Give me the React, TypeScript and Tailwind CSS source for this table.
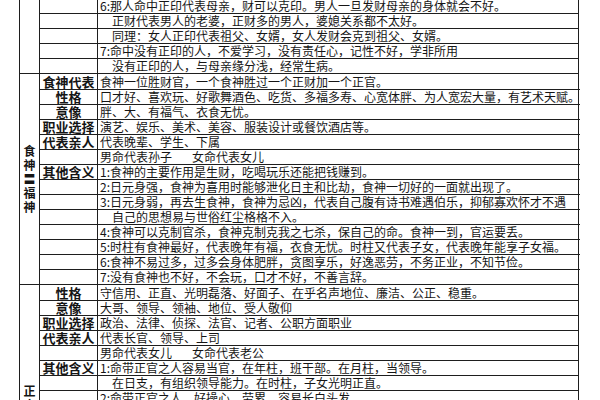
import React from "react";

type Row = { label?: string; text?: React.ReactNode; indent?: boolean };
type Section = { title: string[]; rows: Row[] };

const pair = (a: string, b: string) => (
    <>
        {a}
        <span className="ml-[20px]">{b}</span>
    </>
);

const sections: Section[] = [
    {
        title: [],
        rows: [
            { text: "6:那人命中正印代表母亲，财可以克印。男人一旦发财母亲的身体就会不好。" },
            { text: "正财代表男人的老婆，正财多的男人，婆媳关系都不太好。", indent: true },
            { text: "同理：女人正印代表祖父、女婿，女人发财会克到祖父、女婿。", indent: true },
            { text: "7:命中没有正印的人，不爱学习，没有责任心，记性不好，学非所用" },
            { text: "没有正印的人，与母亲缘分浅，经常生病。", indent: true },
        ],
    },
    {
        title: ["食", "神", "〓", "福", "神"],
        rows: [
            { label: "食神代表", text: "食神一位胜财官，一个食神胜过一个正财加一个正官。" },
            { label: "性格", text: "口才好、喜欢玩、好歌舞酒色、吃货、多福多寿、心宽体胖、为人宽宏大量，有艺术天赋。" },
            { label: "意像", text: "胖、大、有福气、衣食无忧。" },
            { label: "职业选择", text: "演艺、娱乐、美术、美容、服装设计或餐饮酒店等。" },
            { label: "代表亲人", text: "代表晚辈、学生、下属" },
            { text: pair("男命代表孙子", "女命代表女儿") },
            { label: "其他含义", text: "1:食神的主要作用是生财，吃喝玩乐还能把钱赚到。" },
            { text: "2:日元身强，食神为喜用时能够泄化日主和比劫，食神一切好的一面就出现了。" },
            { text: "3:日元身弱，再去生食神，食神为忌凶，代表自己腹有诗书难遇伯乐，抑郁寡欢怀才不遇" },
            { text: "自己的思想易与世俗红尘格格不入。", indent: true },
            { text: "4:食神可以克制官杀，食神克制克我之七杀，保自己的命。食神一到，官运要丢。" },
            { text: "5:时柱有食神最好，代表晚年有福，衣食无忧。时柱又代表子女，代表晚年能享子女福。" },
            { text: "6:食神不易过多，过多会身体肥胖，贪图享乐，好逸恶劳，不务正业，不知节俭。" },
            { text: "7:没有食神也不好，不会玩，口才不好，不善言辞。" },
        ],
    },
    {
        title: ["正", "官"],
        rows: [
            { label: "性格", text: "守信用、正直、光明磊落、好面子、在乎名声地位、廉洁、公正、稳重。" },
            { label: "意像", text: "大哥、领导、领袖、地位、受人敬仰" },
            { label: "职业选择", text: "政治、法律、侦探、法官、记者、公职方面职业" },
            { label: "代表亲人", text: "代表长官、领导、上司" },
            { text: pair("男命代表女儿", "女命代表老公") },
            { label: "其他含义", text: "1:命带正官之人容易当官，在年柱，班干部。在月柱，当领导。" },
            { text: "在日支，有组织领导能力。在时柱，子女光明正直。", indent: true },
            { text: "2:命带正官之人，好操心、劳累、容易长白头发。" },
            { text: "" },
            { text: "" },
            { text: "" },
            { text: "" },
            { text: "" },
            { text: "" },
            { text: "" },
        ],
    },
];

export default function App() {
    return (
        <div
            className="h-[400px] w-[600px] overflow-hidden bg-white text-[#151515]"
            style={{ fontFamily: '"Noto Sans CJK SC", "Liberation Serif", serif' }}
        >
            <div className="-mt-[3px] ml-[19px] w-[560px] border-x border-[#1e1e1e]">
                {sections.map((section, si) => (
                    <div key={si} className="flex border-t border-[#1e1e1e]">
                        <div className="flex w-[20px] shrink-0 flex-col items-center justify-center border-r border-[#1e1e1e] text-[12px] font-bold leading-[14px]">
                            {section.title.map((ch, i) => (
                                <span key={i}>{ch}</span>
                            ))}
                        </div>
                        <div className="flex-1">
                            {section.rows.map((row, ri) => (
                                <div
                                    key={ri}
                                    className={
                                        ri === 0
                                            ? "flex h-[15px] items-center"
                                            : "flex h-[15px] items-center border-t border-[#1e1e1e]"
                                    }
                                >
                                    <div className="flex h-full w-[58px] shrink-0 items-center justify-center border-r border-[#1e1e1e] text-[13px] font-bold leading-[14px]">
                                        {row.label}
                                    </div>
                                    <div
                                        className={
                                            row.indent
                                                ? "min-w-0 flex-1 truncate pl-[14px] text-[12px] leading-[14px]"
                                                : "min-w-0 flex-1 truncate pl-[2px] text-[12px] leading-[14px]"
                                        }
                                    >
                                        {row.text}
                                    </div>
                                </div>
                            ))}
                        </div>
                    </div>
                ))}
            </div>
        </div>
    );
}
